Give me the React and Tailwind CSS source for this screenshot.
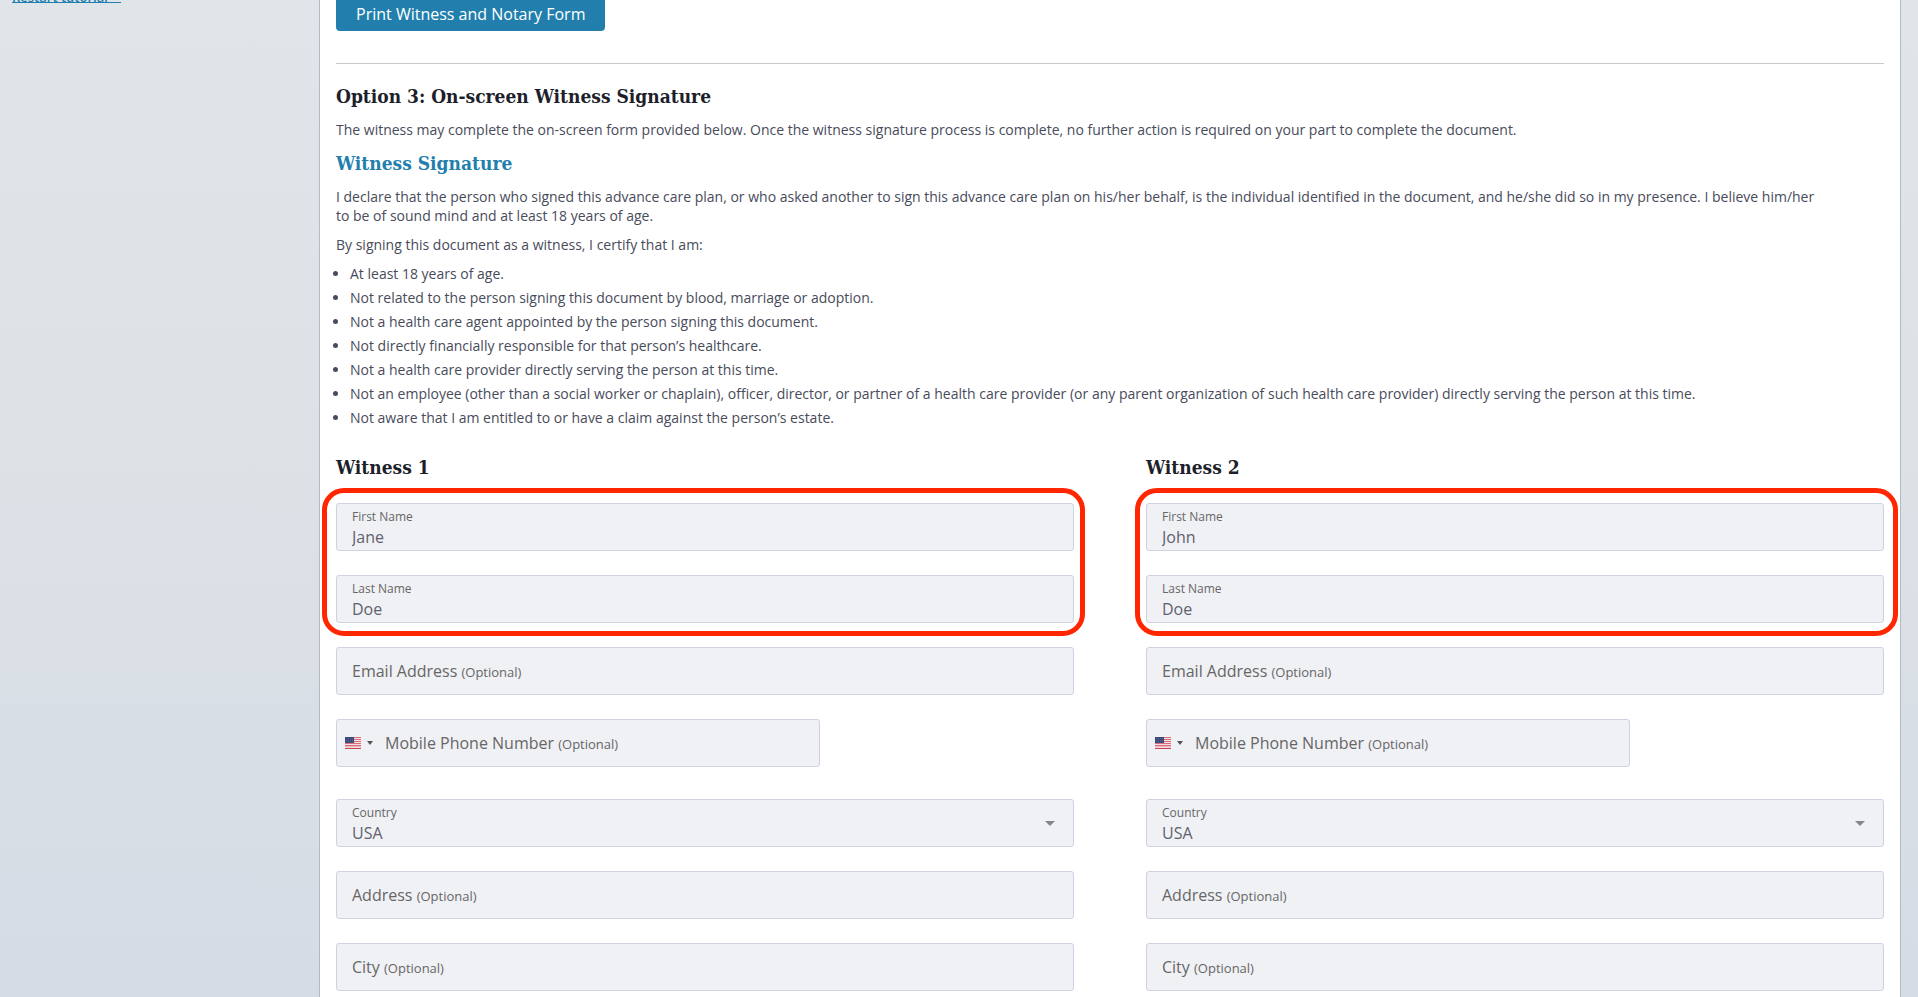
import React, { useId } from 'react';

const statements = [
  'At least 18 years of age.',
  'Not related to the person signing this document by blood, marriage or adoption.',
  'Not a health care agent appointed by the person signing this document.',
  'Not directly financially responsible for that person’s healthcare.',
  'Not a health care provider directly serving the person at this time.',
  'Not an employee (other than a social worker or chaplain), officer, director, or partner of a health care provider (or any parent organization of such health care provider) directly serving the person at this time.',
  'Not aware that I am entitled to or have a claim against the person’s estate.',
];

const box =
  'relative flex h-12 rounded-[3px] border border-[#cfd2e1] bg-[#f0f1f5] focus-within:border-[#227fad]';
const heading =
  "font-['DejaVu_Serif_Condensed','DejaVu_Serif',serif] font-bold text-[19px] leading-7";

function FilledField({ label, value }) {
  const id = useId();
  return (
    <div className={`${box} flex-col px-[15px] pt-1`}>
      <label htmlFor={id} className="text-xs leading-[18px] text-[#666]">
        {label}
      </label>
      <input
        id={id}
        defaultValue={value}
        className="h-[22px] w-full bg-transparent text-base leading-[22px] text-[#5f616e] outline-none"
      />
    </div>
  );
}

function OptionalField({ label, type = 'text' }) {
  const id = useId();
  return (
    <div className={`${box} items-center px-[15px]`}>
      <label htmlFor={id} className="shrink-0 text-base text-[#666]">
        {label} <span className="text-[13px]">(Optional)</span>
      </label>
      <input id={id} type={type} className="h-full min-w-0 flex-1 bg-transparent outline-none" />
    </div>
  );
}

function UsFlag() {
  return (
    <svg width="16" height="12" viewBox="0 0 16 12" aria-hidden="true">
      <rect width="16" height="12" fill="#f3dfe2" />
      {[0, 2, 4, 6, 8].map((y) => (
        <rect key={y} y={y} width="16" height="1" fill="#d8707b" />
      ))}
      <rect y="9" width="16" height="1" fill="#e8b4ba" />
      <rect y="11" width="16" height="1" fill="#c9434f" />
      <rect width="9" height="6" fill="#3c4a7a" />
      <path d="M1 1.5h7M1 3.5h7M1 5h7" stroke="#6a76a0" strokeWidth="0.5" strokeDasharray="1 1" />
    </svg>
  );
}

function PhoneField() {
  const id = useId();
  return (
    <div className={`${box} w-[484px] max-w-full items-center pl-2`}>
      <button type="button" aria-label="Select country code" className="flex items-center gap-[6px]">
        <UsFlag />
        <svg width="6" height="4" viewBox="0 0 6 4" aria-hidden="true">
          <path d="M0 0h6L3 4z" fill="#555" />
        </svg>
      </button>
      <label htmlFor={id} className="ml-3 shrink-0 text-base text-[#666]">
        Mobile Phone Number <span className="text-[13px]">(Optional)</span>
      </label>
      <input id={id} type="tel" className="h-full min-w-0 flex-1 bg-transparent outline-none" />
    </div>
  );
}

function CountryField() {
  const id = useId();
  return (
    <div className={`${box} mt-2 flex-col px-[15px] pt-1`}>
      <label htmlFor={id} className="text-xs leading-[18px] text-[#666]">
        Country
      </label>
      <select
        id={id}
        defaultValue="USA"
        className="h-[22px] w-full appearance-none bg-transparent text-base leading-[22px] text-[#5f616e] outline-none"
      >
        <option>USA</option>
        <option>Canada</option>
      </select>
      <svg
        width="10"
        height="5"
        viewBox="0 0 10 5"
        className="pointer-events-none absolute top-[21px] right-[18px]"
        aria-hidden="true"
      >
        <path d="M0 0h10L5 5z" fill="#85868d" />
      </svg>
    </div>
  );
}

function WitnessForm({ title, first, last, frame }) {
  return (
    <section className="flex flex-1 flex-col">
      <h3 className={`${heading} text-[#1d1f2b]`}>{title}</h3>
      <div className="mt-[22px] flex flex-col gap-6">
        <div className="relative flex flex-col gap-6">
          <FilledField label="First Name" value={first} />
          <FilledField label="Last Name" value={last} />
          <div
            className={`pointer-events-none absolute -top-[15px] -bottom-[13px] rounded-[22px] border-5 border-[#ff2600] ${frame}`}
          />
        </div>
        <OptionalField label="Email Address" type="email" />
        <PhoneField />
        <CountryField />
        <OptionalField label="Address" />
        <OptionalField label="City" />
      </div>
    </section>
  );
}

export default function App() {
  return (
    <div className="flex h-screen overflow-hidden bg-linear-to-b from-[#e0e5ea] via-[#dce1e6] to-[#d6dce6] font-['Open_Sans',sans-serif] text-sm leading-[19px] text-[#484b5a]">
      <aside className="w-[319px] shrink-0 pl-3">
        <a
          href="#tutorial"
          className="-mt-[11px] flex h-[14px] w-[109px] border-b border-[#227fad] text-[13px] leading-4 font-semibold text-[#227fad]"
        >
          Restart tutorial
        </a>
      </aside>

      <main className="mr-[17px] flex-1 border-x border-[#b4bac1] bg-white px-4 pb-4">
        <button
          type="button"
          className="-mt-1 block h-[35px] rounded bg-[#227fad] px-5 text-base text-white"
        >
          Print Witness and Notary Form
        </button>
        <hr className="mt-8 border-[#c9cacc]" />

        <h2 className={`${heading} mt-[18px] text-[#1d1f2b]`}>
          Option 3: On-screen Witness Signature
        </h2>
        <p className="mt-[10px]">
          The witness may complete the on-screen form provided below. Once the witness signature
          process is complete, no further action is required on your part to complete the document.
        </p>
        <h2 className={`${heading} mt-[10px] text-[#227fad]`}>Witness Signature</h2>
        <p className="mt-[10px]">
          I declare that the person who signed this advance care plan, or who asked another to sign
          this advance care plan on his/her behalf, is the individual identified in the document, and
          he/she did so in my presence. I believe him/her to&nbsp;be&nbsp;of&nbsp;sound&nbsp;mind and
          at least 18 years of age.
        </p>
        <p className="mt-[10px]">By signing this document as a witness, I certify that I am:</p>
        <ul className="mt-[10px] list-disc space-y-[5px] pl-[14px]">
          {statements.map((text) => (
            <li key={text}>{text}</li>
          ))}
        </ul>

        <div className="mt-[26px] flex gap-[72px]">
          <WitnessForm title="Witness 1" first="Jane" last="Doe" frame="-left-[14px] -right-[11px]" />
          <WitnessForm title="Witness 2" first="John" last="Doe" frame="-left-[11px] -right-[14px]" />
        </div>
      </main>
    </div>
  );
}
